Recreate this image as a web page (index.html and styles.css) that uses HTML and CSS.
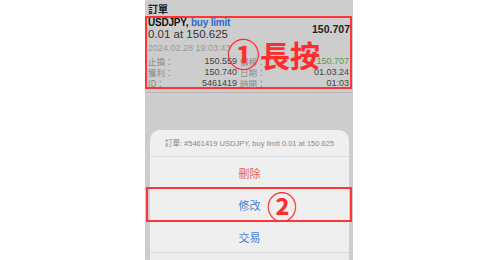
FILE: index.html
```html
<!DOCTYPE html>
<html>
<head>
<meta charset="utf-8">
<link rel="stylesheet" href="styles.css">
</head>
<body>
<div class="screen">
  <div class="header">訂單</div>
  <div class="order">
    <div class="top">
      <div class="left">
        <div class="sym"><span class="pair">USDJPY,</span> <span class="type">buy limit</span></div>
        <div class="vol">0.01 at 150.625</div>
      </div>
      <div class="price">150.707</div>
    </div>
    <div class="date">2024.02.28 19:03:43</div>
    <div class="grid">
      <div class="cell"><span class="lbl">止損：</span><span class="val">150.559</span></div>
      <div class="cell"><span class="lbl">價格：</span><span class="val green">150.707</span></div>
      <div class="cell"><span class="lbl">獲利：</span><span class="val">150.740</span></div>
      <div class="cell"><span class="lbl">日期：</span><span class="val">01.03.24</span></div>
      <div class="cell"><span class="lbl">ID：</span><span class="val">5461419</span></div>
      <div class="cell"><span class="lbl">時間：</span><span class="val">01:03</span></div>
    </div>
    <div class="note1"><span class="circ">①</span>長按</div>
  </div>
  <div class="rule"></div>
  <div class="sheet">
    <div class="title">訂單: #5461419 USDJPY, buy limit 0.01 at 150.625</div>
    <div class="row del">刪除</div>
    <div class="row blue mod">修改<span class="note2">②</span></div>
    <div class="row blue">交易</div>
    <div class="rest"></div>
  </div>
</div>
</body>
</html>
```
FILE: styles.css
```css
html, body { margin: 0; padding: 0; background: #fff; }
body { width: 500px; height: 260px; overflow: hidden; font-family: "Liberation Sans", "Noto Sans CJK TC", sans-serif; }
.screen { margin-left: 145px; width: 208px; height: 260px; background: #cdcdcd; display: flex; flex-direction: column; }
.header { height: 16px; line-height: 17px; padding-left: 3px; font-size: 10px; font-weight: bold; color: #222; font-family: "Noto Sans CJK TC", sans-serif; }
.order { position: relative; height: 73px; box-sizing: border-box; border: 2px solid #ff3434; margin-right: 1px; padding: 0 0 0 1px; }
.top { display: flex; justify-content: space-between; align-items: center; }
.sym { font-size: 10px; font-weight: bold; line-height: 10px; letter-spacing: -0.2px; }
.pair { color: #111; }
.type { color: #2f6ad0; }
.vol { font-size: 11.5px; line-height: 13px; color: #333; }
.price { font-size: 10.5px; font-weight: bold; color: #222; padding-right: 0; margin-top: -1px; }
.date { font-size: 9px; color: #9a9a9a; line-height: 10px; margin-top: 2px; }
.grid { display: grid; grid-template-columns: 90px 1fr; column-gap: 2px; margin-top: 3px; }
.cell { display: flex; justify-content: space-between; align-items: center; font-size: 9px; line-height: 11px; height: 11px; padding-right: 1px; }
.lbl { color: #8a8a8a; font-family: "Noto Sans CJK TC", sans-serif; font-size: 8.5px; }
.val { color: #444; }
.green { color: #5c9a4c; }
.note1 { position: absolute; left: 80px; top: 18px; font-size: 30px; line-height: 34px; font-weight: bold; color: #ff2d2d; font-family: "Noto Sans CJK TC", sans-serif; white-space: nowrap; }
.circ { font-size: 33px; margin-right: 0; }
.rule { height: 1px; background: #b9b9b9; margin-top: 3px; }
.sheet { margin: 37px 4px 0 5px; background: #efefef; border-radius: 10px 10px 0 0; flex: 1; display: flex; flex-direction: column; }
.title { height: 26px; line-height: 27px; text-align: center; font-size: 7.5px; color: #8a8a8a; border-bottom: 1px solid #dcdcdc; }
.row { position: relative; height: 32px; line-height: 32px; text-align: center; font-size: 11px; font-family: "Noto Sans CJK TC", sans-serif; border-bottom: 1px solid #dcdcdc; box-sizing: border-box; }
.del { color: #e06262; }
.blue { color: #4a7fd6; }
.mod::after { content: ""; position: absolute; left: -4px; right: -3px; top: -2px; bottom: -2px; border: 2px solid #ff3434; }
.note2 { position: absolute; left: 117px; top: 0; font-size: 30px; line-height: 32px; font-weight: bold; color: #ff2d2d; }
.rest { flex: 1; background: #ececec; }
```
